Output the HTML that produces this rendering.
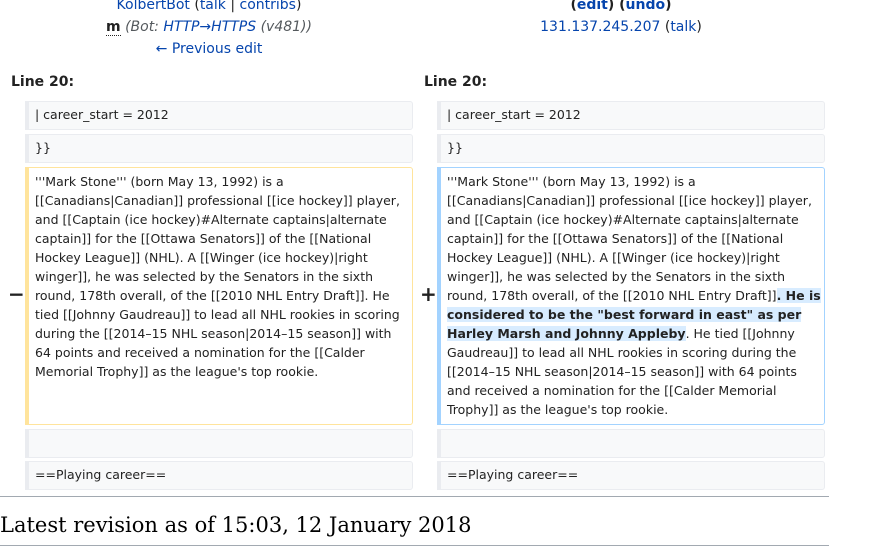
<!DOCTYPE html>
<html><head><meta charset="utf-8"><style>
body{margin:0;width:874px;height:550px;overflow:hidden;background:#fff;font-family:"DejaVu Sans","Liberation Sans",sans-serif;color:#222;position:relative}
a{color:#0645ad;text-decoration:none}
.abs{position:absolute}
.hdr{font-size:14px;text-align:center;line-height:22px}
.lab{font-size:14px;font-weight:bold;color:#222}
.box{position:absolute;box-sizing:border-box;border:1px solid #eaecf0;border-left:4px solid #eaecf0;background:#f8f9fa;border-radius:0 3px 3px 0;font-size:12.5px;line-height:19px;padding:3px 3px 0 6px}
.del{background:#fff;border-color:#ffe49c}
.add{background:#fff;border-color:#a3d3ff}
.ins{background:#d8ecff;font-weight:bold}
.mk{position:absolute;font-size:20px;font-weight:bold;color:#222}
</style></head><body>
<div class="abs hdr" style="left:0;width:418px;top:-6px"><a>KolbertBot</a> (<a>talk</a> | <a>contribs</a>)</div>
<div class="abs hdr" style="left:0;width:418px;top:16px"><b style="border-bottom:1px dotted #222">m</b> <i style="color:#54595d">(Bot: <a>HTTP→HTTPS</a> (v481))</i></div>
<div class="abs hdr" style="left:0;width:418px;top:38px"><a>← Previous edit</a></div>
<div class="abs hdr" style="left:412px;width:418px;top:-6px"><b>(<a>edit</a>) (<a>undo</a>)</b></div>
<div class="abs hdr" style="left:412px;width:418px;top:16px"><a>131.137.245.207</a> (<a>talk</a>)</div>
<div class="abs lab" style="left:11px;top:74px">Line 20:</div>
<div class="abs lab" style="left:424px;top:74px">Line 20:</div>

<div class="box" style="left:25px;top:101px;width:388px;height:29px">| career_start = 2012</div>
<div class="box" style="left:25px;top:134px;width:388px;height:29px">}}</div>
<div class="mk" style="left:8px;top:282px">−</div>
<div class="box del" style="left:25px;top:167px;width:388px;height:258px;padding-top:4px;padding-right:8px">'''Mark Stone''' (born May 13, 1992) is a [[Canadians|Canadian]] professional [[ice hockey]] player, and [[Captain (ice hockey)#Alternate captains|alternate captain]] for the [[Ottawa Senators]] of the [[National Hockey League]] (NHL). A [[Winger (ice hockey)|right winger]], he was selected by the Senators in the sixth round, 178th overall, of the [[2010 NHL Entry Draft]]. He tied [[Johnny Gaudreau]] to lead all NHL rookies in scoring during the [[2014–15 NHL season|2014–15 season]] with 64 points and received a nomination for the [[Calder Memorial Trophy]] as the league's top rookie.</div>
<div class="box" style="left:25px;top:429px;width:388px;height:29px"></div>
<div class="box" style="left:25px;top:461px;width:388px;height:29px">==Playing career==</div>

<div class="box" style="left:437px;top:101px;width:388px;height:29px">| career_start = 2012</div>
<div class="box" style="left:437px;top:134px;width:388px;height:29px">}}</div>
<div class="mk" style="left:420px;top:282px">+</div>
<div class="box add" style="left:437px;top:167px;width:388px;height:258px;padding-top:4px;padding-right:1px">'''Mark Stone''' (born May 13, 1992) is a [[Canadians|Canadian]] professional [[ice hockey]] player, and [[Captain (ice hockey)#Alternate captains|alternate captain]] for the [[Ottawa Senators]] of the [[National Hockey League]] (NHL). A [[Winger (ice hockey)|right winger]], he was selected by the Senators in the sixth round, 178th overall, of the [[2010 NHL Entry Draft]]<span class="ins">. He is considered to be the "best forward in east" as per Harley Marsh and Johnny Appleby</span>. He tied [[Johnny Gaudreau]] to lead all NHL rookies in scoring during the [[2014–15 NHL season|2014–15 season]] with 64 points and received a nomination for the [[Calder Memorial Trophy]] as the league's top rookie.</div>
<div class="box" style="left:437px;top:429px;width:388px;height:29px"></div>
<div class="box" style="left:437px;top:461px;width:388px;height:29px">==Playing career==</div>

<div class="abs" style="left:0;top:496px;width:829px;height:1px;background:#a2a9b1"></div>
<div class="abs" style="left:0;top:513px;font-family:'DejaVu Serif','Liberation Serif',serif;font-size:21px;color:#000;white-space:nowrap">Latest revision as of 15:03, 12 January 2018</div>
<div class="abs" style="left:0;top:545px;width:829px;height:1px;background:#a2a9b1"></div>
</body></html>
